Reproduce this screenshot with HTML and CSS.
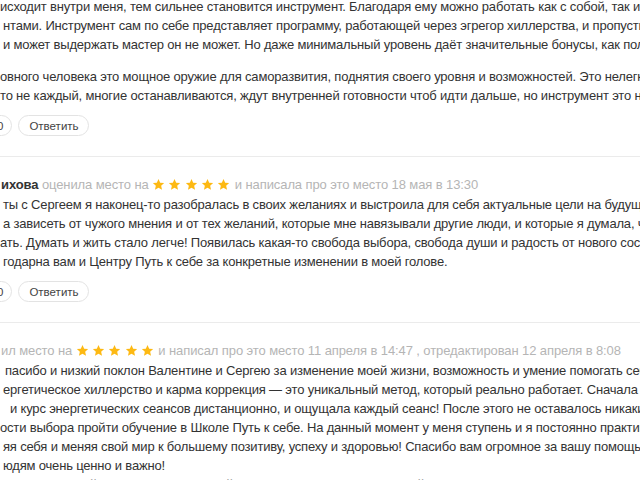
FILE: index.html
```html
<!DOCTYPE html>
<html lang="ru">
<head>
<meta charset="utf-8">
<title>Отзывы</title>
<link rel="stylesheet" href="styles.css">
</head>
<body>
<div class="feed">
  <div class="review first">
    <div class="text">
      <p class="para">
        <span class="line cut">исходит внутри меня, тем сильнее становится инструмент. Благодаря ему можно работать как с собой, так и с другими</span>
        <span class="line">нтами. Инструмент сам по себе представляет программу, работающей через эгрегор хиллерства, и пропустить через себя</span>
        <span class="line">и может выдержать мастер он не может. Но даже минимальный уровень даёт значительные бонусы, как получение</span>
      </p>
      <p class="para">
        <span class="line cut">овного человека это мощное оружие для саморазвития, поднятия своего уровня и возможностей. Это нелегкий путь</span>
        <span class="line cut">то не каждый, многие останавливаются, ждут внутренней готовности чтоб идти дальше, но инструмент это не</span>
      </p>
    </div>
    <div class="actions">
      <span class="pill like">0</span>
      <span class="pill">Ответить</span>
    </div>
  </div>

  <div class="review">
    <div class="meta"><b class="name">ихова</b> оценила место на <span class="stars"><svg viewBox="0 0 24 24"><path d="M12 1.8l3.1 6.9 7.3.7-5.5 4.9 1.6 7.3L12 17.9l-6.5 3.7 1.6-7.3L1.6 9.4l7.3-.7z"/></svg><svg viewBox="0 0 24 24"><path d="M12 1.8l3.1 6.9 7.3.7-5.5 4.9 1.6 7.3L12 17.9l-6.5 3.7 1.6-7.3L1.6 9.4l7.3-.7z"/></svg><svg viewBox="0 0 24 24"><path d="M12 1.8l3.1 6.9 7.3.7-5.5 4.9 1.6 7.3L12 17.9l-6.5 3.7 1.6-7.3L1.6 9.4l7.3-.7z"/></svg><svg viewBox="0 0 24 24"><path d="M12 1.8l3.1 6.9 7.3.7-5.5 4.9 1.6 7.3L12 17.9l-6.5 3.7 1.6-7.3L1.6 9.4l7.3-.7z"/></svg><svg viewBox="0 0 24 24"><path d="M12 1.8l3.1 6.9 7.3.7-5.5 4.9 1.6 7.3L12 17.9l-6.5 3.7 1.6-7.3L1.6 9.4l7.3-.7z"/></svg></span> и написала про это место 18 мая в 13:30</div>
    <div class="text">
      <p class="para">
        <span class="line">ты с Сергеем я наконец-то разобралась в своих желаниях и выстроила для себя актуальные цели на будущее.</span>
        <span class="line">а зависеть от чужого мнения и от тех желаний, которые мне навязывали другие люди, и которые я думала, что мои</span>
        <span class="line cut">ать. Думать и жить стало легче! Появилась какая-то свобода выбора, свобода души и радость от нового состояния</span>
        <span class="line">годарна вам и Центру Путь к себе за конкретные изменении в моей голове.</span>
      </p>
    </div>
    <div class="actions">
      <span class="pill like">0</span>
      <span class="pill">Ответить</span>
    </div>
  </div>

  <div class="review">
    <div class="meta">ил место на <span class="stars"><svg viewBox="0 0 24 24"><path d="M12 1.8l3.1 6.9 7.3.7-5.5 4.9 1.6 7.3L12 17.9l-6.5 3.7 1.6-7.3L1.6 9.4l7.3-.7z"/></svg><svg viewBox="0 0 24 24"><path d="M12 1.8l3.1 6.9 7.3.7-5.5 4.9 1.6 7.3L12 17.9l-6.5 3.7 1.6-7.3L1.6 9.4l7.3-.7z"/></svg><svg viewBox="0 0 24 24"><path d="M12 1.8l3.1 6.9 7.3.7-5.5 4.9 1.6 7.3L12 17.9l-6.5 3.7 1.6-7.3L1.6 9.4l7.3-.7z"/></svg><svg viewBox="0 0 24 24"><path d="M12 1.8l3.1 6.9 7.3.7-5.5 4.9 1.6 7.3L12 17.9l-6.5 3.7 1.6-7.3L1.6 9.4l7.3-.7z"/></svg><svg viewBox="0 0 24 24"><path d="M12 1.8l3.1 6.9 7.3.7-5.5 4.9 1.6 7.3L12 17.9l-6.5 3.7 1.6-7.3L1.6 9.4l7.3-.7z"/></svg></span> и написал про это место 11 апреля в 14:47 , отредактирован 12 апреля в 8:08</div>
    <div class="text">
      <p class="para">
        <span class="line shift">пасибо и низкий поклон Валентине и Сергею за изменение моей жизни, возможность и умение помогать себе и</span>
        <span class="line">ергетическое хиллерство и карма коррекция — это уникальный метод, который реально работает. Сначала я</span>
        <span class="line indent">и курс энергетических сеансов дистанционно, и ощущала каждый сеанс! После этого не оставалось никаких</span>
        <span class="line cut">ости выбора пройти обучение в Школе Путь к себе. На данный момент у меня ступень и я постоянно практикую</span>
        <span class="line">яя себя и меняя свой мир к большему позитиву, успеху и здоровью! Спасибо вам огромное за вашу помощь</span>
        <span class="line">юдям очень ценно и важно!</span>
        <span class="line">чень грамотный специалист и сильный мастер. Валентина — огромной души человек! Сильная видящая и</span>
      </p>
    </div>
  </div>
</div>
</body>
</html>
```

FILE: styles.css
```css
html, body {
  margin: 0;
  padding: 0;
  background: #fff;
  overflow: hidden;
  width: 640px;
  height: 480px;
}

.feed {
  font-family: "Liberation Sans", Arial, sans-serif;
  font-size: 13px;
  color: #333;
  margin-top: -3px;
}

.review {
  padding: 18px 0 20px 3px;
  border-bottom: 1px solid #ebebeb;
}

.review.first {
  padding-top: 0;
}

.para {
  margin: 0 0 13px;
}

.para:last-child {
  margin-bottom: 0;
}

.line {
  display: block;
  line-height: 19px;
  white-space: nowrap;
  letter-spacing: -0.18px;
}

.line.cut {
  margin-left: -3px;
}

.line.shift {
  margin-left: 2px;
}

.line.indent {
  margin-left: 7px;
}

.meta {
  line-height: 20px;
  color: #b5b5b5;
  white-space: nowrap;
  letter-spacing: -0.1px;
  margin-left: -2px;
}

.name {
  color: #333;
  font-weight: bold;
}

.stars {
  display: inline-flex;
  gap: 3.3px;
  vertical-align: -2px;
  margin: 0 1px 0 0;
}

.stars svg {
  width: 13px;
  height: 13px;
  fill: #fdb913;
}

.actions {
  display: flex;
  gap: 6px;
  margin-top: 10px;
  margin-left: -3px;
}

.pill {
  display: inline-flex;
  align-items: center;
  height: 19px;
  padding: 0 9px 0 10px;
  border: 1px solid #e3e3e3;
  border-radius: 11px;
  font-size: 11.5px;
  color: #444;
}

.pill.like {
  margin-left: -24px;
  padding: 0 8px 0 20px;
}
```
